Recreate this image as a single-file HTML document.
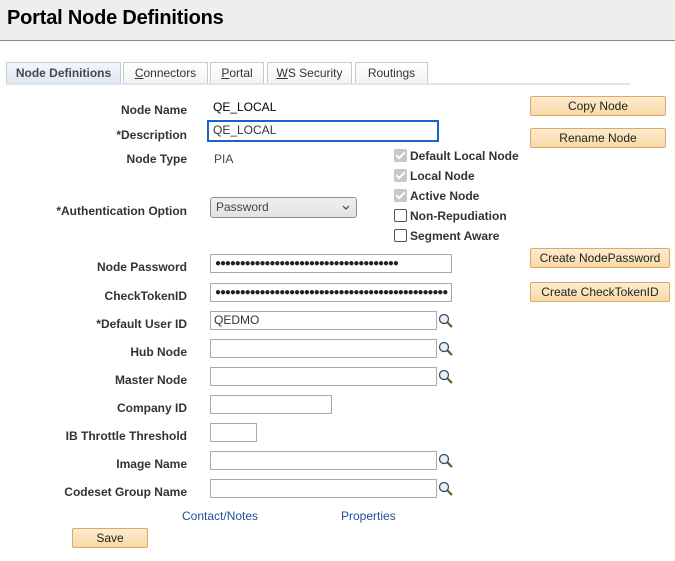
<!DOCTYPE html>
<html><head><style>
*{margin:0;padding:0;box-sizing:border-box}
body{width:675px;height:561px;background:#fff;font-family:"Liberation Sans",Arial,sans-serif;position:relative;overflow:hidden}
.a{position:absolute}
.hdr{left:0;top:0;width:675px;height:41px;background:#efeeec;border-bottom:1px solid #8a8a8a}
h1{position:absolute;left:7px;top:7px;font-size:20px;font-weight:bold;color:#000;letter-spacing:-0.2px}
.tab{position:absolute;top:62px;height:21px;border:1px solid #c9c9c9;border-bottom:none;background:linear-gradient(#fff,#f3f3f3);font-size:12px;color:#333;text-align:center;line-height:20px}
.tab.on{background:linear-gradient(#f4f6f9,#dfe6ee);font-weight:bold;color:#3d4a5a;height:22px}
.tline{left:6px;top:83px;width:624px;height:2px;background:#dbe5f0}
.lbl{position:absolute;right:488px;font-size:12px;font-weight:bold;color:#333;white-space:nowrap;text-align:right}
.val{position:absolute;font-size:12px;color:#222}
.in{position:absolute;left:210px;height:19px;border:1px solid #a9a9a9;background:#fff;font-size:12px;color:#333;padding-left:3px;line-height:17px}
.pw{font-size:10px;letter-spacing:-1.1px;overflow:hidden;white-space:nowrap;color:#222;padding-left:4px}
.btn{position:absolute;height:20px;border:1px solid #e0a66a;border-radius:2px;background:linear-gradient(#fdeccf,#f8d9a6);font-size:12px;color:#222;text-align:center;line-height:18px}
.cb{position:absolute;left:394px;width:13px;height:13px;border-radius:2px}
.cb.dis{background:#c8c8c8}
.cb.dis:after{content:"";position:absolute;left:4px;top:1px;width:3px;height:7px;border:solid #fff;border-width:0 2px 2px 0;transform:rotate(45deg)}
.cb.off{border:1px solid #555;background:#fff}
.cl{position:absolute;left:410px;font-size:12px;font-weight:bold;color:#333}
.lk{position:absolute;font-size:12px;color:#1f4f99}
.mg{position:absolute;left:438px;width:16px;height:16px}
</style></head><body>
<div class="a hdr"></div>
<h1>Portal Node Definitions</h1>
<div class="tab on" style="left:6px;width:115px">Node Definitions</div>
<div class="tab" style="left:123px;width:85px"><u>C</u>onnectors</div>
<div class="tab" style="left:210px;width:54px"><u>P</u>ortal</div>
<div class="tab" style="left:267px;width:85px"><u>W</u>S Security</div>
<div class="tab" style="left:355px;width:73px">Routings</div>
<div class="a tline"></div>

<div class="lbl" style="top:103px">Node Name</div>
<div class="val" style="left:213px;top:100px;color:#000">QE_LOCAL</div>
<div class="lbl" style="top:128px">*Description</div>
<div class="a" style="left:207px;top:120px;width:232px;height:22px;border:2px solid #1a63c8;font-size:12px;color:#333;padding:1px 0 0 4px">QE_LOCAL</div>
<div class="lbl" style="top:152px">Node Type</div>
<div class="val" style="left:214px;top:152px;color:#444">PIA</div>
<div class="lbl" style="top:204px">*Authentication Option</div>
<div class="a" style="left:210px;top:197px;width:147px;height:21px;border:1px solid #8e8e8e;border-radius:3px;background:linear-gradient(#f0f0f0,#e2e2e2);font-size:12px;color:#444;padding:2px 0 0 5px">Password<svg style="position:absolute;right:6px;top:7px" width="8" height="5" viewBox="0 0 8 5"><path d="M1 1 4 4 7 1" fill="none" stroke="#444" stroke-width="1.2"/></svg></div>

<div class="cb dis" style="top:149px"></div><div class="cl" style="top:149px">Default Local Node</div>
<div class="cb dis" style="top:169px"></div><div class="cl" style="top:169px">Local Node</div>
<div class="cb dis" style="top:189px"></div><div class="cl" style="top:189px">Active Node</div>
<div class="cb off" style="top:209px"></div><div class="cl" style="top:209px">Non-Repudiation</div>
<div class="cb off" style="top:229px"></div><div class="cl" style="top:229px">Segment Aware</div>

<div class="btn" style="left:530px;top:96px;width:136px">Copy Node</div>
<div class="btn" style="left:530px;top:128px;width:136px">Rename Node</div>
<div class="btn" style="left:530px;top:248px;width:140px">Create NodePassword</div>
<div class="btn" style="left:530px;top:282px;width:140px">Create CheckTokenID</div>

<div class="lbl" style="top:260px">Node Password</div>
<div class="in pw" style="top:254px;width:242px">●●●●●●●●●●●●●●●●●●●●●●●●●●●●●●●●●●●●●</div>
<div class="lbl" style="top:289px">CheckTokenID</div>
<div class="in pw" style="top:283px;width:242px">●●●●●●●●●●●●●●●●●●●●●●●●●●●●●●●●●●●●●●●●●●●●●●●</div>
<div class="lbl" style="top:317px">*Default User ID</div>
<div class="in" style="top:311px;width:227px">QEDMO</div>
<div class="lbl" style="top:345px">Hub Node</div>
<div class="in" style="top:339px;width:227px"></div>
<div class="lbl" style="top:373px">Master Node</div>
<div class="in" style="top:367px;width:227px"></div>
<div class="lbl" style="top:401px">Company ID</div>
<div class="in" style="top:395px;width:122px"></div>
<div class="lbl" style="top:429px">IB Throttle Threshold</div>
<div class="in" style="top:423px;width:47px"></div>
<div class="lbl" style="top:457px">Image Name</div>
<div class="in" style="top:451px;width:227px"></div>
<div class="lbl" style="top:485px">Codeset Group Name</div>
<div class="in" style="top:479px;width:227px"></div>

<svg class="mg" style="top:313px" viewBox="0 0 16 16"><circle cx="6" cy="6" r="4.5" fill="#e8f0f8" stroke="#3a4a5a" stroke-width="1.3"/><path d="M9.3 9.3 14 14" stroke="#6a5a2a" stroke-width="2.2"/></svg>
<svg class="mg" style="top:341px" viewBox="0 0 16 16"><circle cx="6" cy="6" r="4.5" fill="#e8f0f8" stroke="#3a4a5a" stroke-width="1.3"/><path d="M9.3 9.3 14 14" stroke="#6a5a2a" stroke-width="2.2"/></svg>
<svg class="mg" style="top:369px" viewBox="0 0 16 16"><circle cx="6" cy="6" r="4.5" fill="#e8f0f8" stroke="#3a4a5a" stroke-width="1.3"/><path d="M9.3 9.3 14 14" stroke="#6a5a2a" stroke-width="2.2"/></svg>
<svg class="mg" style="top:453px" viewBox="0 0 16 16"><circle cx="6" cy="6" r="4.5" fill="#e8f0f8" stroke="#3a4a5a" stroke-width="1.3"/><path d="M9.3 9.3 14 14" stroke="#6a5a2a" stroke-width="2.2"/></svg>
<svg class="mg" style="top:481px" viewBox="0 0 16 16"><circle cx="6" cy="6" r="4.5" fill="#e8f0f8" stroke="#3a4a5a" stroke-width="1.3"/><path d="M9.3 9.3 14 14" stroke="#6a5a2a" stroke-width="2.2"/></svg>

<div class="lk" style="left:182px;top:509px">Contact/Notes</div>
<div class="lk" style="left:341px;top:509px">Properties</div>
<div class="btn" style="left:72px;top:528px;width:76px">Save</div>
</body></html>
